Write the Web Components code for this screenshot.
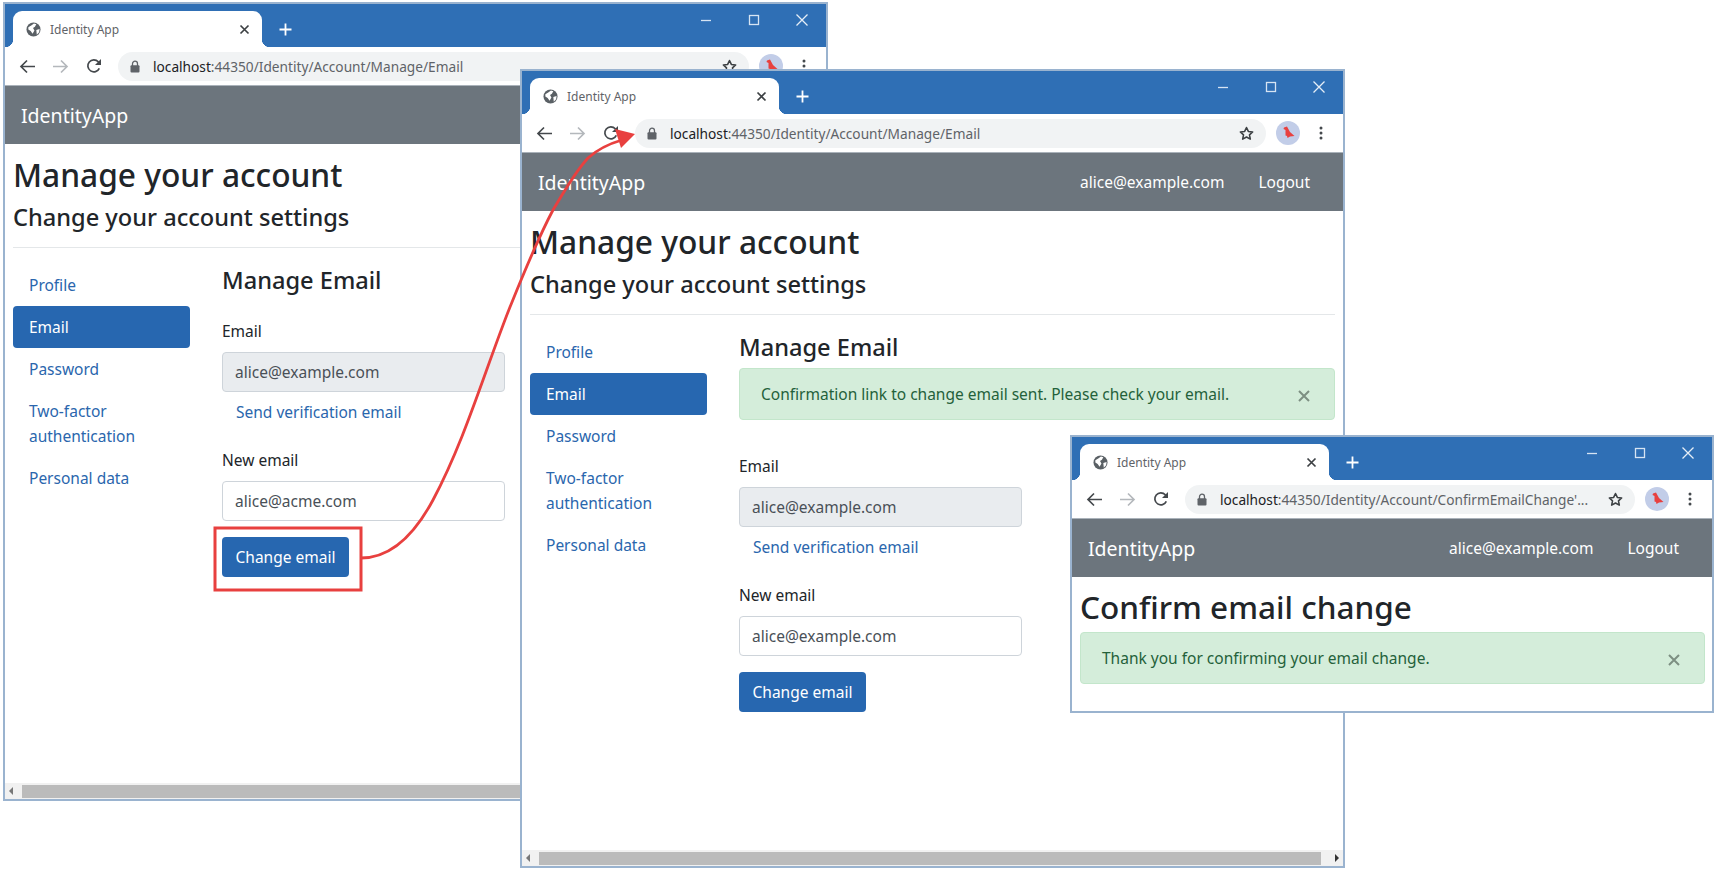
<!DOCTYPE html>
<html>
<head>
<meta charset="utf-8">
<title>Identity App</title>
<style>
  html, body { margin: 0; padding: 0; background: #fff; }
  body { width: 1717px; height: 870px; position: relative; overflow: hidden; font-family: "Noto Sans", "Open Sans", sans-serif; color: #212529; }
  browser-window.w1 { left: 3px; top: 2px; width: 825px; height: 799px; }
  browser-window.w2 { left: 520px; top: 69px; width: 825px; height: 799px; }
  browser-window.w3 { left: 1070px; top: 435px; width: 644px; height: 278px; }
  .arrow { position: absolute; left: 0; top: 0; }
</style>
</head>
<body>

<browser-window class="w1" url="localhost:44350/Identity/Account/Manage/Email" scrollbar>
  <account-page current-email="alice@example.com" new-email="alice@acme.com"></account-page>
</browser-window>

<browser-window class="w2" url="localhost:44350/Identity/Account/Manage/Email" user="alice@example.com" scrollbar>
  <account-page current-email="alice@example.com" new-email="alice@example.com">
    <alert-box slot="alert">Confirmation link to change email sent. Please check your email.</alert-box>
  </account-page>
</browser-window>

<!-- callout over the second window -->
<svg class="arrow" width="1717" height="870" fill="none">
  <rect x="215" y="528" width="146" height="62" stroke="#e8403f" stroke-width="3"/>
  <path d="M361 558C395 558 418 528 433 500C465 440 485 370 510 307C525 270 537 240 553 210C565 190 575 172 588 158C598 149 608 144 622 140" stroke="#e8403f" stroke-width="2.8"/>
  <path d="M635 134L615 129L621 148Z" fill="#e8403f"/>
</svg>

<browser-window class="w3" url="localhost:44350/Identity/Account/ConfirmEmailChange&#39;..." user="alice@example.com">
  <confirm-page>
    <alert-box>Thank you for confirming your email change.</alert-box>
  </confirm-page>
</browser-window>

<script>
const windowTemplate = document.createElement("template");
windowTemplate.innerHTML = `
  <style>
    :host {
      position: absolute;
      display: flex;
      flex-direction: column;
      box-sizing: border-box;
      border: 2px solid #9ab3cf;
      background: #fff;
      overflow: hidden;
    }
    .titlebar {
      height: 43px;
      flex: none;
      background: #2f6fb5;
      display: flex;
      align-items: flex-end;
      padding-left: 8px;
      position: relative;
      box-sizing: border-box;
    }
    .tab {
      width: 249px;
      height: 36px;
      box-sizing: border-box;
      background: #fff;
      border-radius: 9px 9px 0 0;
      display: flex;
      align-items: center;
      padding: 0 12px 0 13px;
      position: relative;
      color: #5f6368;
      font-size: 12px;
    }
    .tab::before, .tab::after {
      content: "";
      position: absolute;
      bottom: 0;
      width: 8px;
      height: 8px;
    }
    .tab::before { left: -8px; background: radial-gradient(circle at 0 0, #2f6fb5 8px, #fff 8.5px); }
    .tab::after { right: -8px; background: radial-gradient(circle at 100% 0, #2f6fb5 8px, #fff 8.5px); }
    .tab span { flex: 1; margin-left: 9px; }
    .plus { margin: 0 0 9px 15px; }
    .controls {
      position: absolute;
      right: 0;
      top: 0;
      display: flex;
    }
    .controls svg { display: block; width: 48px; height: 28px; }
    .toolbar {
      height: 39px;
      flex: none;
      display: flex;
      align-items: center;
      background: #fff;
      border-bottom: 1px solid #aab2ba;
      box-sizing: border-box;
      padding-left: 6px;
    }
    .btn { width: 33px; display: flex; justify-content: center; flex: none; }
    .omni {
      flex: 1;
      height: 29px;
      margin-left: 8px;
      border-radius: 15px;
      background: #f1f3f4;
      display: flex;
      align-items: center;
      padding: 0 11px 0 12px;
      font-size: 13.7px;
      color: #202124;
      min-width: 0;
    }
    .omni .url { flex: 1; margin-left: 13px; white-space: nowrap; overflow: hidden; }
    .omni .url i { font-style: normal; color: #5f6368; }
    .avatar { margin: 0 19px 0 10px; flex: none; }
    .dots { margin-right: 20px; flex: none; }
    .navbar {
      height: 58px;
      flex: none;
      background: #6c757d;
      color: #fff;
      display: flex;
      align-items: center;
      padding: 0 33px 0 16px;
      font-size: 19.5px;
      box-sizing: border-box;
    }
    .brand { flex: 1; }
    .user { font-size: 15.5px; margin-right: 34px; }
    .logout { font-size: 15.5px; }
    .content { flex: 1; min-height: 0; overflow: hidden; }
    .scroll {
      height: 16px;
      flex: none;
      background: #f1f1f1;
      display: none;
      align-items: center;
      padding: 0 4px;
      box-sizing: border-box;
    }
    :host([scrollbar]) .scroll { display: flex; }
    .thumb { flex: 1; height: 13px; background: #bbb; margin: 0 14px 0 9px; }
    .arr { width: 0; height: 0; border-top: 4px solid transparent; border-bottom: 4px solid transparent; }
    .arr.l { border-right: 4px solid #777; }
    .arr.r { border-left: 4px solid #333; }
  </style>
  <div class="titlebar">
    <div class="tab">
      <svg width="15" height="15" viewBox="0 0 16 16"><circle cx="8" cy="8" r="7.5" fill="#5a6065"/><path d="M2.5 5.5L6 3.5 8.5 1.5 11 2.5 9.5 5 7.5 6.5 9 9 7 12.5 5 9.5 2.5 8ZM11 8.5L14.5 7.5 14 11 11.5 13.5Z" fill="#fff"/></svg>
      <span>Identity App</span>
      <svg width="11" height="11" viewBox="0 0 11 11"><path d="M1.5 1.5L9.5 9.5M9.5 1.5L1.5 9.5" stroke="#3c4043" stroke-width="1.7"/></svg>
    </div>
    <svg class="plus" width="17" height="17" viewBox="0 0 17 17"><path d="M8.5 2.5V14.5M2.5 8.5H14.5" stroke="#fff" stroke-width="1.8"/></svg>
    <div class="controls">
      <svg viewBox="0 0 48 28"><path d="M19 16.5H29" stroke="#d6e4f3" stroke-width="1.3"/></svg>
      <svg viewBox="0 0 48 28"><rect x="19.5" y="11.5" width="9" height="9" fill="none" stroke="#d6e4f3" stroke-width="1.3"/></svg>
      <svg viewBox="0 0 48 28"><path d="M18.5 10.5L29.5 21.5M29.5 10.5L18.5 21.5" stroke="#e6eef7" stroke-width="1.3"/></svg>
    </div>
  </div>
  <div class="toolbar">
    <div class="btn"><svg width="17" height="15" viewBox="0 0 17 15"><path d="M16 7.5H2M8 1.5L2 7.5 8 13.5" fill="none" stroke="#44484c" stroke-width="1.7"/></svg></div>
    <div class="btn"><svg width="17" height="15" viewBox="0 0 17 15"><path d="M1 7.5H15M9 1.5L15 7.5 9 13.5" fill="none" stroke="#b4b8bc" stroke-width="1.7"/></svg></div>
    <div class="btn"><svg width="16" height="16" viewBox="0 0 16 16"><path d="M13.3 10.3A6 6 0 1 1 12.3 3.8L14.5 6" fill="none" stroke="#44484c" stroke-width="1.7"/><path d="M15 1V7H9Z" fill="#44484c"/></svg></div>
    <div class="omni">
      <svg width="10" height="13" viewBox="0 0 10 13"><path d="M2.5 6V3.7a2.5 2.5 0 0 1 5 0V6" fill="none" stroke="#5f6368" stroke-width="1.3"/><rect x="0.5" y="5.2" width="9" height="7.3" rx="1" fill="#5f6368"/></svg>
      <span class="url"></span>
      <svg width="17" height="17" viewBox="0 0 24 24"><path d="M12 3.5l2.6 5.6 6.1.7-4.5 4.1 1.2 6L12 16.9 6.600 19.900l1.200-6L3.300 9.800l6.100-.7z" fill="none" stroke="#3c4043" stroke-width="2.200" stroke-linejoin="round"/></svg>
    </div>
    <svg class="avatar" width="24" height="24" viewBox="0 0 24 24"><circle cx="12" cy="12" r="12" fill="#c2cde8"/><path d="M8 6.500L11 5.500 14 11 18.500 15 14 15.500 11.500 17 11 15 9.500 14.500 9.500 9 7.500 8Z" fill="#e8403f"/></svg>
    <svg class="dots" width="4" height="14" viewBox="0 0 4 14"><circle cx="2" cy="2" r="1.500" fill="#44484c"/><circle cx="2" cy="7" r="1.500" fill="#44484c"/><circle cx="2" cy="12" r="1.500" fill="#44484c"/></svg>
  </div>
  <div class="navbar">
    <span class="brand">IdentityApp</span>
    <span class="user"></span>
    <span class="logout"></span>
  </div>
  <div class="content"><slot></slot></div>
  <div class="scroll"><div class="arr l"></div><div class="thumb"></div><div class="arr r"></div></div>
`;

class BrowserWindow extends HTMLElement {
  constructor() {
    super();
    this.attachShadow({ mode: "open" });
    this.shadowRoot.appendChild(windowTemplate.content.cloneNode(true));
  }

  connectedCallback() {
    // host part of the url is darker than the path, as chrome does it
    const url = this.getAttribute("url") || "";
    const cut = url.indexOf(":");
    const urlEl = this.shadowRoot.querySelector(".url");
    urlEl.textContent = url.slice(0, cut);
    const rest = document.createElement("i");
    rest.textContent = url.slice(cut);
    urlEl.appendChild(rest);

    const user = this.getAttribute("user");
    if (user) {
      this.shadowRoot.querySelector(".user").textContent = user;
      this.shadowRoot.querySelector(".logout").textContent = "Logout";
    }
  }
}

class AlertBox extends HTMLElement {
  constructor() {
    super();
    this.attachShadow({ mode: "open" }).innerHTML = `
      <style>
        :host {
          display: flex;
          align-items: center;
          box-sizing: border-box;
          height: 52px;
          padding: 0 24px 0 21px;
          background: #d4edda;
          border: 1px solid #c3e6cb;
          border-radius: 4px;
          color: #24613a;
          font-size: 15.5px;
        }
        .msg { flex: 1; }
        svg { margin-top: 4px; }
      </style>
      <span class="msg"><slot></slot></span>
      <svg width="12" height="12" viewBox="0 0 12 12"><path d="M1 1L11 11M11 1L1 11" stroke="#7d8f82" stroke-width="2"/></svg>
    `;
  }
}

class TextField extends HTMLElement {
  constructor() {
    super();
    this.attachShadow({ mode: "open" }).innerHTML = `
      <style>
        :host { display: block; width: 283px; font-size: 15.5px; }
        label { display: block; height: 25px; line-height: 25px; margin-bottom: 8px; color: #212529; }
        .box {
          height: 40px;
          box-sizing: border-box;
          border: 1px solid #ced4da;
          border-radius: 4px;
          padding: 0 12px;
          line-height: 38px;
          color: #495057;
          background: #fff;
        }
        :host([disabled]) .box { background: #e9ecef; }
      </style>
      <label></label>
      <div class="box"></div>
    `;
  }

  connectedCallback() {
    this.shadowRoot.querySelector("label").textContent = this.getAttribute("label");
    this.shadowRoot.querySelector(".box").textContent = this.getAttribute("value");
  }
}

class SideNav extends HTMLElement {
  constructor() {
    super();
    const items = ["Profile", "Email", "Password", "Two-factor authentication", "Personal data"];
    this.attachShadow({ mode: "open" }).innerHTML = `
      <style>
        :host { display: block; width: 177px; font-size: 15.5px; }
        a {
          display: block;
          padding: 9px 16px 8px;
          line-height: 25px;
          color: #2a66ad;
          border-radius: 4px;
        }
        a.active { background: #2767b0; color: #fff; }
      </style>
      ${items.map(t => `<a class="${t === "Email" ? "active" : ""}">${t}</a>`).join("")}
    `;
  }
}

class AccountPage extends HTMLElement {
  constructor() {
    super();
    this.attachShadow({ mode: "open" }).innerHTML = `
      <style>
        :host { display: block; padding: 10px 8px 0 8px; }
        h1 { margin: 0; font-size: 31.7px; line-height: 42px; font-weight: 500; color: #212529; }
        h4 { margin: 6px 0 0; font-size: 23.6px; line-height: 30px; font-weight: 500; color: #212529; }
        hr { margin: 15px 0 16px; border: 0; border-top: 1px solid #e4e7e9; }
        .row { display: grid; grid-template-columns: 177px 1fr; column-gap: 32px; }
        h2 { margin: 1px 0 0; font-size: 23.6px; line-height: 30px; font-weight: 500; color: #212529; }
        .form { margin-top: 24px; }
        ::slotted(alert-box) { margin: 6px 0 34px; }
        .send { display: block; margin: 8px 0 23px 14px; line-height: 25px; font-size: 15.5px; color: #2a66ad; }
        .submit {
          display: inline-block;
          margin-top: 16px;
          width: 127px;
          height: 40px;
          line-height: 40px;
          text-align: center;
          border-radius: 4px;
          background: #2767b0;
          color: #fff;
          font-size: 15.5px;
        }
      </style>
      <h1>Manage your account</h1>
      <h4>Change your account settings</h4>
      <hr>
      <div class="row">
        <side-nav></side-nav>
        <div>
          <h2>Manage Email</h2>
          <slot name="alert"></slot>
          <div class="form">
            <text-field label="Email" value="${this.getAttribute("current-email")}" disabled></text-field>
            <a class="send">Send verification email</a>
            <text-field label="New email" value="${this.getAttribute("new-email")}"></text-field>
            <a class="submit">Change email</a>
          </div>
        </div>
      </div>
    `;
  }
}

class ConfirmPage extends HTMLElement {
  constructor() {
    super();
    this.attachShadow({ mode: "open" }).innerHTML = `
      <style>
        :host { display: block; padding: 9px 7px 0 8px; }
        h1 { margin: 0 0 4px; font-size: 31.5px; line-height: 42px; font-weight: 500; color: #212529; }
      </style>
      <h1>Confirm email change</h1>
      <slot></slot>
    `;
  }
}

customElements.define("browser-window", BrowserWindow);
customElements.define("alert-box", AlertBox);
customElements.define("text-field", TextField);
customElements.define("side-nav", SideNav);
customElements.define("account-page", AccountPage);
customElements.define("confirm-page", ConfirmPage);
</script>
</body>
</html>
